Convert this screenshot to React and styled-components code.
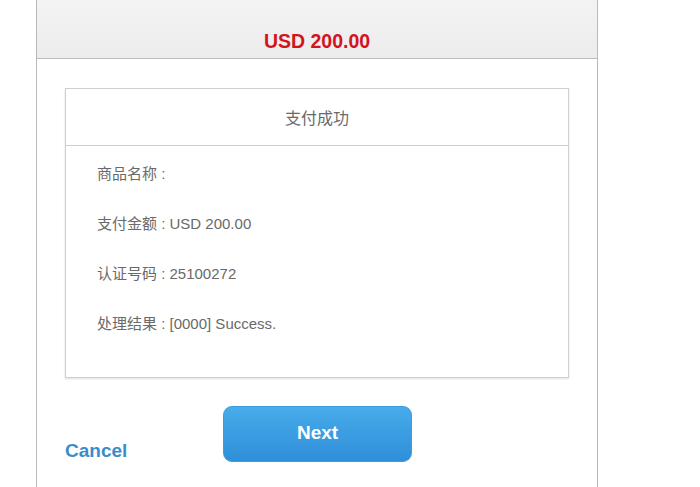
import React from "react";
import styled, { createGlobalStyle } from "styled-components";

const GlobalStyle = createGlobalStyle`
  html, body { margin: 0; padding: 0; background: #ffffff; }
  body { font-family: "Liberation Sans", Arial, "Noto Sans CJK SC", sans-serif; }
`;

const Page = styled.div`
  width: 700px;
  height: 487px;
  overflow: hidden;
`;

const Panel = styled.div`
  margin-left: 36px;
  width: 560px;
  min-height: 520px;
  border-left: 1px solid #b9b9b9;
  border-right: 1px solid #b9b9b9;
  background: #ffffff;
`;

const Header = styled.div`
  height: 59px;
  background: linear-gradient(#f3f3f3, #ececec);
  border-bottom: 1px solid #bdbdbd;
  display: flex;
  align-items: flex-end;
  justify-content: center;
  box-sizing: border-box;
  padding-bottom: 5px;
`;

const Amount = styled.div`
  color: #d3141d;
  font-weight: bold;
  font-size: 19.5px;
  line-height: 24px;
`;

const Content = styled.div`
  padding: 29px 28px 0 28px;
`;

const Card = styled.div`
  border: 1px solid #cfcfcf;
  box-shadow: 0 1px 2px rgba(0, 0, 0, 0.12);
  background: #fff;
`;

const CardTitle = styled.div`
  height: 56px;
  border-bottom: 1px solid #cfcfcf;
  display: flex;
  align-items: center;
  justify-content: center;
  color: #6a6a6a;
  font-size: 16px;
  font-family: "Liberation Sans", "Noto Sans CJK SC", sans-serif;
`;

const CardBody = styled.div`
  padding: 18px 31px 43px 31px;
  display: flex;
  flex-direction: column;
  gap: 30px;
`;

const Row = styled.div`
  color: #6a6a6a;
  font-size: 15px;
  line-height: 20px;
  font-family: "Liberation Sans", "Noto Sans CJK SC", sans-serif;
`;

const Footer = styled.div`
  display: flex;
  align-items: flex-start;
  margin-top: 28px;
`;

const CancelLink = styled.a`
  width: 158px;
  margin-top: 34px;
  color: #3a8dca;
  font-weight: bold;
  font-size: 19px;
  line-height: 22px;
  text-decoration: none;
  cursor: pointer;
`;

const NextButton = styled.button`
  width: 189px;
  height: 56px;
  border: 1px solid #3c9ce0;
  border-radius: 9px;
  background: linear-gradient(#48abea, #2e8fd9);
  color: #fff;
  font-family: "Liberation Sans", Arial, sans-serif;
  font-weight: bold;
  font-size: 19px;
  padding: 0 0 2px 0;
  cursor: pointer;
`;

const rows = [
  "商品名称 : ",
  "支付金额 : USD 200.00",
  "认证号码 : 25100272",
  "处理结果 : [0000] Success.",
];

export default function App() {
  return (
    <Page>
      <GlobalStyle />
      <Panel>
        <Header>
          <Amount>USD 200.00</Amount>
        </Header>
        <Content>
          <Card>
            <CardTitle>支付成功</CardTitle>
            <CardBody>
              {rows.map((r) => (
                <Row key={r}>{r}</Row>
              ))}
            </CardBody>
          </Card>
          <Footer>
            <CancelLink>Cancel</CancelLink>
            <NextButton>Next</NextButton>
          </Footer>
        </Content>
      </Panel>
    </Page>
  );
}
